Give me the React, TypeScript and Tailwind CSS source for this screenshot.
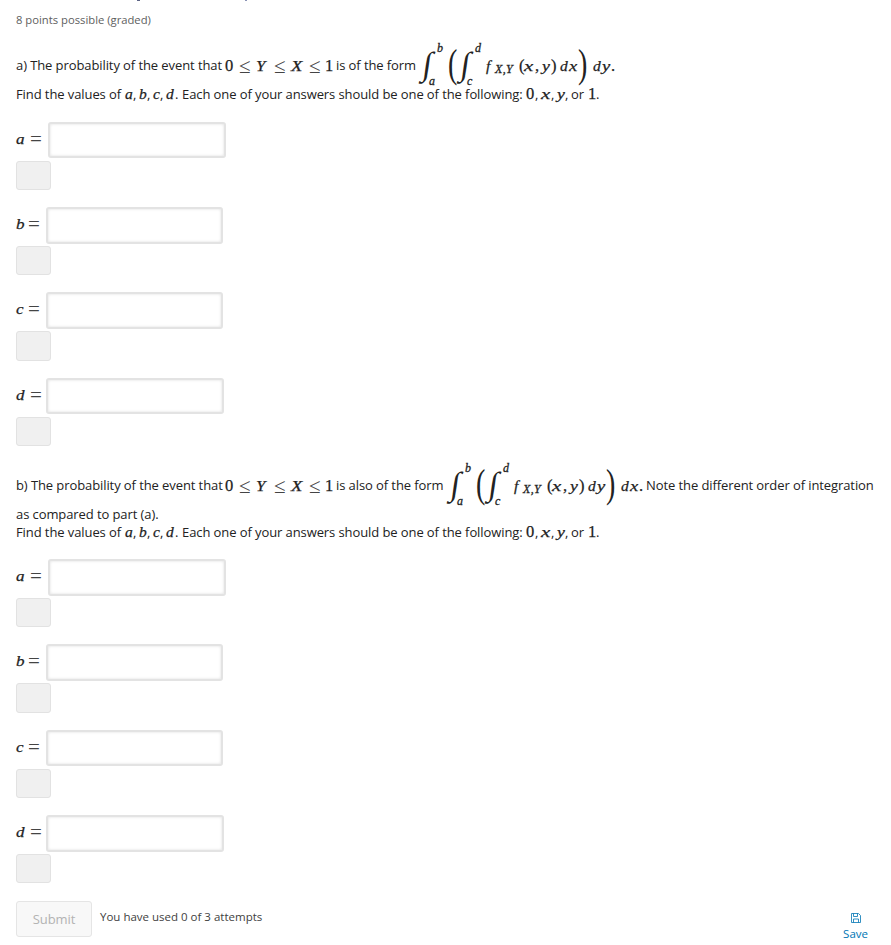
import React from "react";

const it = "font-['Liberation_Serif',serif] italic text-[15.5px] tracking-normal [-webkit-text-stroke:0.25px_#222]";
const wide = "origin-left scale-x-[1.35]";
const up = "font-['Liberation_Serif',serif] text-[16.5px] tracking-normal [-webkit-text-stroke:0.25px_#222]";
const rel = "font-['Liberation_Serif',serif] text-[21px] leading-[18px] tracking-normal text-[#444]";
const sub = "font-['Liberation_Serif',serif] italic text-[12px] tracking-normal [-webkit-text-stroke:0.3px_#222]";

function Seg({ w, c = "", children }: { w: number; c?: string; children?: React.ReactNode }) {
  return (
    <span className={`block shrink-0 whitespace-nowrap ${c}`} style={{ width: w }}>
      {children}
    </span>
  );
}

function Integral({ lower, upper }: { lower: string; upper: string }) {
  return (
    <span className="relative block h-[42px] w-[29px] shrink-0">
      <span className="absolute left-[4px] top-[-1px] block h-[40px] w-[10px] -skew-x-[8deg] font-['Liberation_Serif',serif] text-[33px] leading-[40px]">∫</span>
      <span className={`absolute left-[18px] top-[-4px] leading-[14px] ${sub}`}>{upper}</span>
      <span className={`absolute left-[10px] top-[29px] leading-[14px] ${sub}`}>{lower}</span>
    </span>
  );
}

function Big({ w, children }: { w: number; children: string }) {
  return (
    <span className="block h-[42px] shrink-0" style={{ width: w }}>
      <span className="block origin-left scale-x-[0.7] font-['Liberation_Serif',serif] text-[40px] leading-[37px]">{children}</span>
    </span>
  );
}

function Inequality() {
  return (
    <>
      <Seg w={14} c={up}>0</Seg>
      <Seg w={17} c={rel}>≤</Seg>
      <Seg w={18} c={`${it} origin-left scale-x-[1.1]`}>Y</Seg>
      <Seg w={17} c={rel}>≤</Seg>
      <Seg w={18} c={`${it} origin-left scale-x-[1.2]`}>X</Seg>
      <Seg w={16} c={rel}>≤</Seg>
      <Seg w={11} c={up}>1</Seg>
    </>
  );
}

function Formula({ inner, outer }: { inner: string; outer: string }) {
  return (
    <>
      <Integral lower="a" upper="b" />
      <Big w={9}>(</Big>
      <Integral lower="c" upper="d" />
      <Seg w={9} c={it}>f</Seg>
      <Seg w={24} c={`${sub} pt-[5px] [letter-spacing:0.3px]`}>X,Y</Seg>
      <Seg w={5} c={up}>(</Seg>
      <Seg w={11} c={`${it} ${wide}`}>x</Seg>
      <Seg w={7} c={up}>,</Seg>
      <Seg w={9} c={`${it} origin-left scale-x-[1.15]`}>y</Seg>
      <Seg w={9} c={up}>)</Seg>
      <Seg w={9} c={it}>d</Seg>
      <Seg w={9} c={`${it} origin-left scale-x-[1.2]`}>{inner}</Seg>
      <Big w={15}>)</Big>
      <Seg w={9} c={it}>d</Seg>
      <Seg w={9} c={`${it} origin-left scale-x-[1.2]`}>{outer}</Seg>
    </>
  );
}

function FindLine() {
  return (
    <div className="flex h-[18px] items-baseline leading-[18px]">
      <Seg w={109}>Find the values of</Seg>
      <Seg w={8} c={it}>a</Seg>
      <Seg w={6}>,</Seg>
      <Seg w={8} c={it}>b</Seg>
      <Seg w={6}>,</Seg>
      <Seg w={7} c={it}>c</Seg>
      <Seg w={6}>,</Seg>
      <Seg w={9} c={it}>d</Seg>
      <Seg w={7}>.</Seg>
      <Seg w={344}>Each one of your answers should be one of the following:</Seg>
      <Seg w={9} c={up}>0</Seg>
      <Seg w={6}>,</Seg>
      <Seg w={10} c={`${it} ${wide}`}>x</Seg>
      <Seg w={6}>,</Seg>
      <Seg w={8} c={`${it} origin-left scale-x-[1.15]`}>y</Seg>
      <Seg w={6}>,</Seg>
      <Seg w={17}>or</Seg>
      <Seg w={8} c={up}>1</Seg>
      <Seg w={5}>.</Seg>
    </div>
  );
}

const fields = [
  { name: "a", symbol: 14, label: 32, width: 178 },
  { name: "b", symbol: 12, label: 30, width: 177 },
  { name: "c", symbol: 12, label: 30, width: 177 },
  { name: "d", symbol: 14, label: 30, width: 178 },
];

type Row = { row: number; input: number; gap: number; box: number };

const firstRows: Row[] = [
  { row: 85, input: 36, gap: 3, box: 29 },
  { row: 85, input: 37, gap: 2, box: 29 },
  { row: 86, input: 37, gap: 2, box: 30 },
  { row: 87, input: 36, gap: 3, box: 29 },
];

const secondRows: Row[] = [
  { row: 85, input: 37, gap: 2, box: 29 },
  { row: 86, input: 37, gap: 2, box: 30 },
  { row: 85, input: 36, gap: 3, box: 29 },
  { row: 86, input: 37, gap: 2, box: 29 },
];

function Answers({ rows }: { rows: Row[] }) {
  return (
    <div className="flex flex-col">
      {fields.map((f, i) => (
        <div key={f.name} style={{ height: rows[i].row }}>
          <div className="flex items-start">
            <span className="flex shrink-0 items-start leading-[18px]" style={{ width: f.label }}>
              <Seg w={f.symbol} c={`${it} pt-[8px] origin-left scale-x-[1.1]`}>{f.name}</Seg>
              <Seg w={14} c={`${rel} pt-[8px]`}>=</Seg>
            </span>
            <input
              aria-label={f.name}
              className="shrink-0 rounded-[3px] border-2 border-[#e3e3e3] bg-white px-2 shadow-[inset_0_0_3px_#ddd] outline-none"
              style={{ width: f.width, height: rows[i].input }}
            />
          </div>
          <div
            className="w-[35px] rounded-[3px] border border-[#e2e2e2] bg-[#f0f0f0]"
            style={{ height: rows[i].box, marginTop: rows[i].gap }}
          />
        </div>
      ))}
    </div>
  );
}

export default function App() {
  return (
    <main className="h-[945px] w-[891px] overflow-hidden bg-white pl-4 font-['Open_Sans',sans-serif] text-[13px] tracking-[-0.09px] text-[#222]">
      <div className="flex h-[10px] items-start">
        <span className="ml-[121px] h-px w-[3px] bg-[#5d6485]" />
        <span className="ml-[105px] h-px w-[2px] bg-[#8a93b5]" />
      </div>
      <div className="h-[20px] text-[11.25px] leading-[20px] tracking-normal text-[#5e5e5e]">8 points possible (graded)</div>
      <div className="mt-[15px] flex h-[40px] items-center pt-[2px]">
        <Seg w={209}>a) The probability of the event that</Seg>
        <Inequality />
        <Seg w={83}>is of the form</Seg>
        <Formula inner="x" outer="y" />
        <Seg w={5} c={up}>.</Seg>
      </div>
      <FindLine />
      <div className="h-[19px]" />
      <Answers rows={firstRows} />
      <div className="flex h-[40px] items-center pt-[2px]">
        <Seg w={209}>b) The probability of the event that</Seg>
        <Inequality />
        <Seg w={111}>is also of the form</Seg>
        <Formula inner="y" outer="x" />
        <Seg w={7} c={up}>.</Seg>
        <Seg w={230}>Note the different order of integration</Seg>
      </div>
      <div className="h-[18px] leading-[18px]">as compared to part (a).</div>
      <FindLine />
      <div className="h-[18px]" />
      <Answers rows={secondRows} />
      <div className="flex items-start">
        <button className="h-[36px] w-[76px] rounded-[3px] border border-[#e5e5e5] bg-[#f8f8f8] pt-px text-[13px] text-[#b3b3b3]">Submit</button>
        <span className="ml-2 text-[11.5px] leading-[32px] tracking-normal text-[#414141]">You have used 0 of 3 attempts</span>
        <button className="ml-auto mr-[23px] flex flex-col items-center pt-[12px] text-[#0075b4]">
          <svg width="10" height="10" viewBox="0 0 10 10" fill="none" stroke="currentColor" strokeWidth="0.8">
            <path d="M.5.5h7l2 2v7h-9z M2.5.5v3h4v-3 M2.5 9.5v-3.500h5v3.500" />
          </svg>
          <span className="mt-[3px] text-[11.5px] leading-[16px] tracking-normal">Save</span>
        </button>
      </div>
    </main>
  );
}
